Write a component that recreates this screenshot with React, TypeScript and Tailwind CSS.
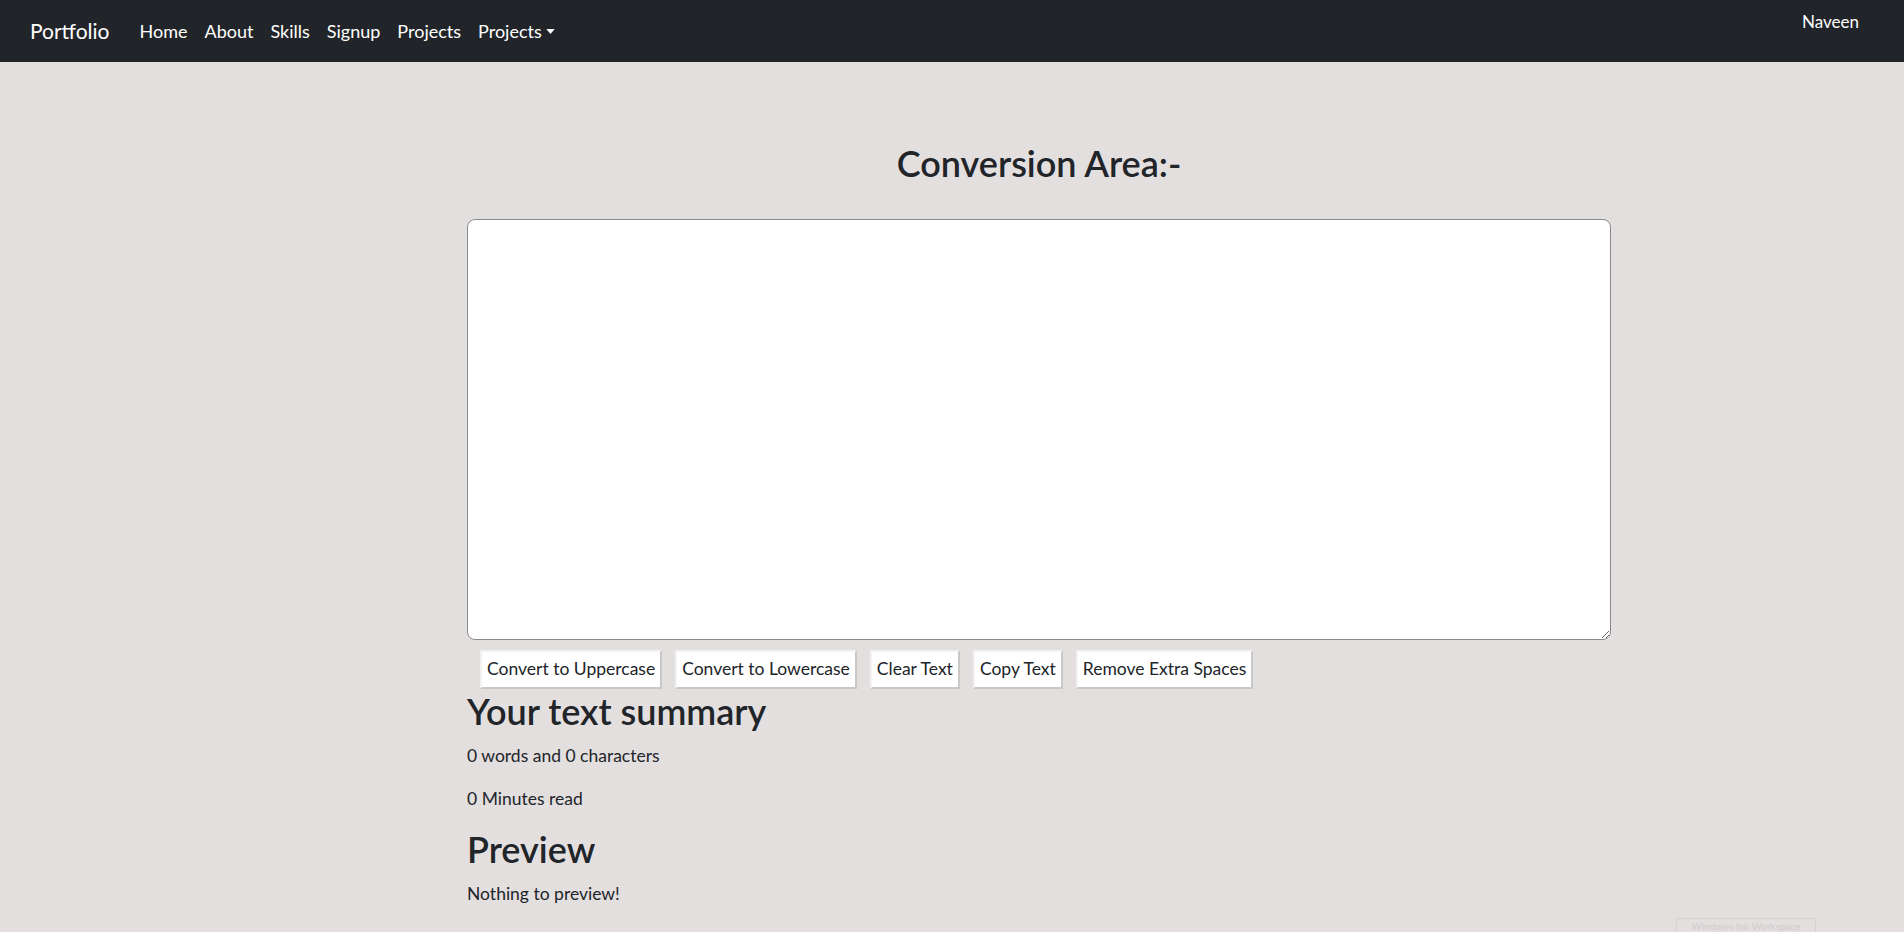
import { useState } from "react";

const NAV_LINKS = ["Home", "About", "Skills", "Signup", "Projects"];

const ACTIONS = [
  "Convert to Uppercase",
  "Convert to Lowercase",
  "Clear Text",
  "Copy Text",
  "Remove Extra Spaces",
];

function Navbar() {
  return (
    <nav className="flex h-[62px] items-center bg-[#212529] pl-[30px] pr-[45px] text-white">
      <span className="mr-[30px] text-[21px]">Portfolio</span>
      <ul className="flex items-center gap-[17px] text-[18px]">
        {NAV_LINKS.map((label) => (
          <li key={label}>
            <a href="#" className="text-white">
              {label}
            </a>
          </li>
        ))}
        <li>
          <a href="#" className="flex items-center text-white">
            Projects
            <svg aria-hidden viewBox="0 0 10 6" className="ml-[4px] h-[5px] w-[9px]" fill="currentColor">
              <path d="M0 0h10L5 6z" />
            </svg>
          </a>
        </li>
      </ul>
      <span className="mb-[18px] ml-auto text-[17px]">Naveen</span>
    </nav>
  );
}

export default function App() {
  const [text, setText] = useState("");
  const words = text.split(/\s+/).filter((w) => w.length > 0).length;

  return (
    <div
      className="relative min-h-[932px] bg-[#e4dfdf] text-[#212529]"
      style={{ fontFamily: "Lato, 'Open Sans', sans-serif" }}
    >
      <Navbar />
      <main className="ml-[467px] w-[1144px] pt-[78px]">
        <h2 className="mb-[33px] text-center text-[36px] leading-[46px] font-semibold">Conversion Area:-</h2>
        <textarea
          value={text}
          onChange={(e) => setText(e.target.value)}
          className="block h-[421px] w-full rounded-[8px] border border-[#8a8a8a] bg-white p-2 text-[17px] outline-none"
        />
        <div className="mt-[10px] flex">
          {ACTIONS.map((label) => (
            <button
              key={label}
              type="button"
              className="ml-[13px] h-[39px] border-2 border-t-[#f2f2f2] border-l-[#f2f2f2] border-r-[#c8c8c8] border-b-[#c8c8c8] bg-white px-[5px] text-[17.5px] text-[#212529]"
            >
              {label}
            </button>
          ))}
        </div>
        <h2 className="mt-[2px] mb-[11px] text-[36px] leading-[41px] font-semibold">Your text summary</h2>
        <p className="mb-[17px] text-[17.5px] leading-[26px]">
          {words} words and {text.length} characters
        </p>
        <p className="mb-[17px] text-[17.5px] leading-[26px]">{0.008 * words} Minutes read</p>
        <h2 className="mt-[2px] mb-[11px] text-[36px] leading-[41px] font-semibold">Preview</h2>
        <p className="text-[17.5px] leading-[26px]">{text.length > 0 ? text : "Nothing to preview!"}</p>
      </main>
      <div className="absolute bottom-0 left-[1676px] h-[14px] w-[140px] overflow-hidden border border-b-0 border-[#d6d2d2] text-center text-[10px] leading-[14px] text-[#d0cccc]">
        Windows Ink Workspace
      </div>
    </div>
  );
}
